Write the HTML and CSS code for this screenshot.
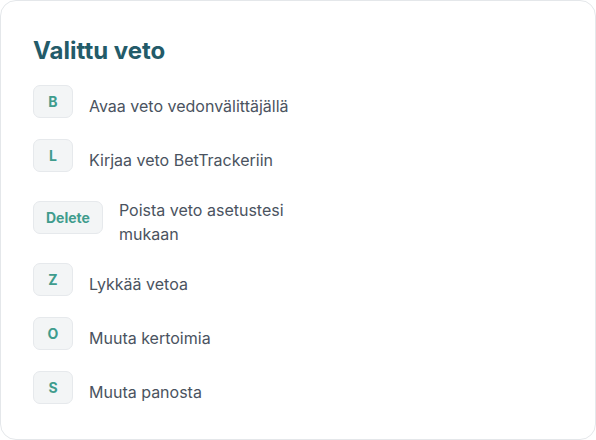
FILE: index.html
```html
<!DOCTYPE html>
<html lang="fi">
<head>
<meta charset="utf-8">
<link rel="stylesheet" href="styles.css">
</head>
<body>
<section class="card">
  <h2 class="title">Valittu veto</h2>
  <ul class="list">
    <li class="row"><span class="key">B</span><span class="label">Avaa veto vedonvälittäjällä</span></li>
    <li class="row"><span class="key">L</span><span class="label">Kirjaa veto BetTrackeriin</span></li>
    <li class="row"><span class="key">Delete</span><span class="label">Poista veto asetustesi mukaan</span></li>
    <li class="row"><span class="key">Z</span><span class="label">Lykkää vetoa</span></li>
    <li class="row"><span class="key">O</span><span class="label">Muuta kertoimia</span></li>
    <li class="row"><span class="key">S</span><span class="label">Muuta panosta</span></li>
  </ul>
</section>
</body>
</html>
```
FILE: styles.css
```css
* { box-sizing: border-box; }
html, body { margin: 0; padding: 0; background: #ffffff; }
body { font-family: Inter, "Noto Sans", sans-serif; }
.card {
  width: 596px;
  height: 440px;
  border: 1px solid #e4e7ea;
  border-radius: 16px;
  padding: 36px 32px 0 32px;
  background: #ffffff;
}
.title {
  margin: 0;
  font-size: 24px;
  line-height: 28px;
  font-weight: 700;
  color: #235b69;
}
.list {
  list-style: none;
  margin: 17px 0 0 0;
  padding: 0;
  width: 300px;
  display: flex;
  flex-direction: column;
  gap: 16px;
}
.row {
  display: flex;
  align-items: center;
  gap: 16px;
  min-height: 38px;
}
.key {
  flex: none;
  min-width: 40px;
  height: 33px;
  padding: 0 12px;
  display: flex;
  align-items: center;
  justify-content: center;
  background: #f3f5f6;
  border: 1px solid #e6e9ec;
  border-radius: 7px;
  color: #3f9c8d;
  font-size: 14px;
  font-weight: 700;
}
.label {
  padding-top: 8px;
  margin-bottom: -2px;
  font-size: 16px;
  line-height: 24px;
  color: #4a5360;
}
```
